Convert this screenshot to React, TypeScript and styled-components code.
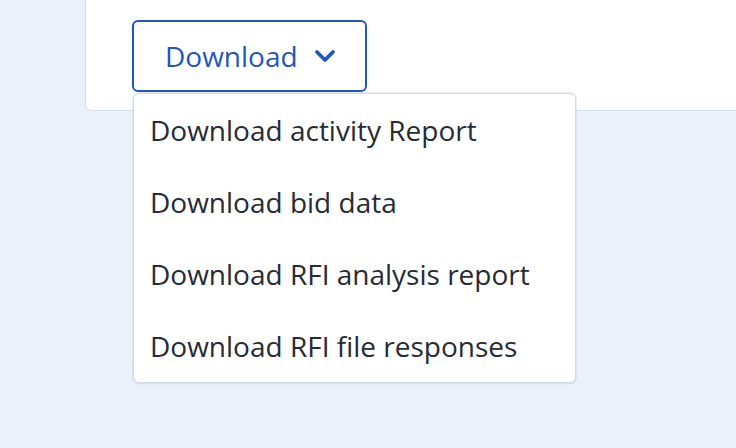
import React from "react";
import styled, { createGlobalStyle } from "styled-components";

const Global = createGlobalStyle`
  html, body { margin: 0; padding: 0; }
  body {
    background: #ebf1fb;
    font-family: "Open Sans", "Noto Sans", sans-serif;
    width: 736px;
    height: 448px;
    overflow: hidden;
  }
`;

const Page = styled.div`
  padding-left: 85px;
  height: 448px;
`;

const Card = styled.div`
  margin-top: -12px;
  width: 651px;
  height: 123px;
  box-sizing: border-box;
  background: #ffffff;
  border: 1px solid #d6deea;
  border-right: none;
  border-radius: 6px 0 0 6px;
  padding: 31px 0 0 46px;
`;

const Wrap = styled.div`
  position: relative;
  display: inline-block;
`;

const Button = styled.button`
  display: flex;
  align-items: center;
  gap: 16px;
  box-sizing: border-box;
  width: 235px;
  height: 72px;
  padding: 0 0 0 31px;
  background: #ffffff;
  border: 2px solid #1f56bf;
  border-radius: 6px;
  color: #1f56bf;
  font-family: "Open Sans", "Noto Sans", sans-serif;
  font-size: 28px;
  cursor: pointer;
`;

const Menu = styled.ul`
  position: absolute;
  top: 73px;
  left: 1px;
  width: 443px;
  box-sizing: border-box;
  margin: 0;
  padding: 0;
  list-style: none;
  background: #ffffff;
  border: 1px solid #d3dbe6;
  border-radius: 6px;
  box-shadow: 0 0 0 1px rgba(200, 212, 230, 0.35), 0 1px 3px rgba(30, 50, 90, 0.08);
`;

const Item = styled.li`
  height: 72px;
  display: flex;
  align-items: center;
  padding-left: 16px;
  font-size: 28px;
  color: #262b36;
`;

const items = [
  "Download activity Report",
  "Download bid data",
  "Download RFI analysis report",
  "Download RFI file responses",
];

export default function App() {
  return (
    <>
      <Global />
      <Page>
        <Card>
          <Wrap>
            <Button>
              Download
              <svg width="22" height="16" viewBox="0 0 22 16">
                <path
                  d="M3 4 L11 12 L19 4"
                  fill="none"
                  stroke="#1f56bf"
                  strokeWidth="3.8"
                  strokeLinecap="round"
                  strokeLinejoin="round"
                />
              </svg>
            </Button>
            <Menu>
              {items.map((t) => (
                <Item key={t}>{t}</Item>
              ))}
            </Menu>
          </Wrap>
        </Card>
      </Page>
    </>
  );
}
